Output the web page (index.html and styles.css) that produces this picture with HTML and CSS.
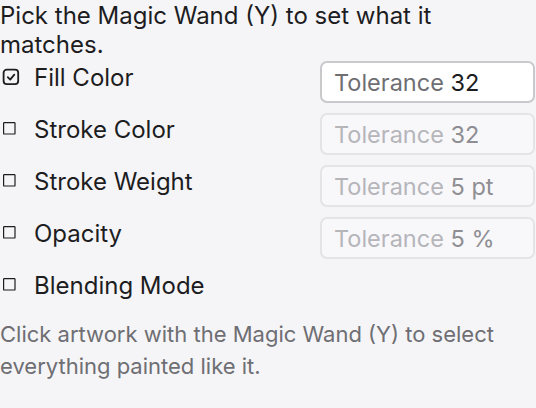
FILE: index.html
```html
<!DOCTYPE html>
<html>
<head>
<meta charset="utf-8">
<link rel="stylesheet" href="styles.css">
</head>
<body>
<div class="panel">
  <p class="title">Pick the Magic Wand (Y) to set what it matches.</p>
  <div class="rows">
    <div class="row">
      <label class="opt">
        <svg class="box" width="34" height="20" viewBox="0 0 34 20"><rect x="3.6" y="2.6" width="14.6" height="14.6" rx="3.2" fill="none" stroke="#1d1d1f" stroke-width="1.8"/><path d="M7.8 10.2 L10.2 12.6 L14.3 7.6" fill="none" stroke="#1d1d1f" stroke-width="1.8" stroke-linecap="round" stroke-linejoin="round"/></svg>
        <span class="name">Fill Color</span>
      </label>
      <div class="field"><span class="text"><span class="key">Tolerance</span> <span class="val">32</span></span></div>
    </div>
    <div class="row">
      <label class="opt">
        <svg class="box" width="34" height="20" viewBox="0 0 34 20"><rect x="3.6" y="3.6" width="11.4" height="11.4" rx="0.6" fill="none" stroke="#1d1d1f" stroke-width="1.2"/></svg>
        <span class="name">Stroke Color</span>
      </label>
      <div class="field off"><span class="text"><span class="key">Tolerance</span> <span class="val">32</span></span></div>
    </div>
    <div class="row">
      <label class="opt">
        <svg class="box" width="34" height="20" viewBox="0 0 34 20"><rect x="3.6" y="3.6" width="11.4" height="11.4" rx="0.6" fill="none" stroke="#1d1d1f" stroke-width="1.2"/></svg>
        <span class="name">Stroke Weight</span>
      </label>
      <div class="field off"><span class="text"><span class="key">Tolerance</span> <span class="val">5 pt</span></span></div>
    </div>
    <div class="row">
      <label class="opt">
        <svg class="box" width="34" height="20" viewBox="0 0 34 20"><rect x="3.6" y="3.6" width="11.4" height="11.4" rx="0.6" fill="none" stroke="#1d1d1f" stroke-width="1.2"/></svg>
        <span class="name">Opacity</span>
      </label>
      <div class="field off"><span class="text"><span class="key">Tolerance</span> <span class="val">5 %</span></span></div>
    </div>
    <div class="row">
      <label class="opt">
        <svg class="box" width="34" height="20" viewBox="0 0 34 20"><rect x="3.6" y="3.6" width="11.4" height="11.4" rx="0.6" fill="none" stroke="#1d1d1f" stroke-width="1.2"/></svg>
        <span class="name">Blending Mode</span>
      </label>
    </div>
  </div>
  <p class="hint">Click artwork with the Magic Wand (Y) to select everything painted like it.</p>
</div>
</body>
</html>
```
FILE: styles.css
```css
html, body {
  margin: 0;
  padding: 0;
  background: #f5f5f7;
}
body {
  font-family: Inter, "Noto Sans", sans-serif;
  font-size: 24px;
  color: #1d1d1f;
}
.panel {
  width: 536px;
}
.title {
  margin: 0;
  max-width: 500px;
  line-height: 29px;
  padding-top: 1px;
}
.rows {
  display: flex;
  flex-direction: column;
  gap: 10px;
  margin-top: 2px;
}
.row {
  display: flex;
  justify-content: space-between;
  align-items: flex-start;
  min-height: 42px;
}
.opt {
  display: flex;
  align-items: flex-start;
  line-height: 30px;
  padding-top: 2px;
}
.box {
  display: block;
  flex: none;
  margin-top: 4px;
}
.field {
  box-sizing: border-box;
  width: 215px;
  height: 42px;
  margin-right: 1px;
  border: 2px solid #c9c9cc;
  border-radius: 7px;
  background: #ffffff;
  padding-left: 12px;
  font-size: 23.5px;
  display: flex;
  align-items: center;
}
.field .key { color: #6e6e73; }
.field .val { color: #1d1d1f; }
.field.off {
  background: #f8f8fa;
  border-color: #e4e4e7;
}
.field.off .key { color: #b5b5ba; }
.field.off .val { color: #8e8e93; }
.hint {
  margin: 7px 0 0;
  font-size: 22px;
  color: #6e6e73;
  line-height: 32px;
  max-width: 510px;
}
```
